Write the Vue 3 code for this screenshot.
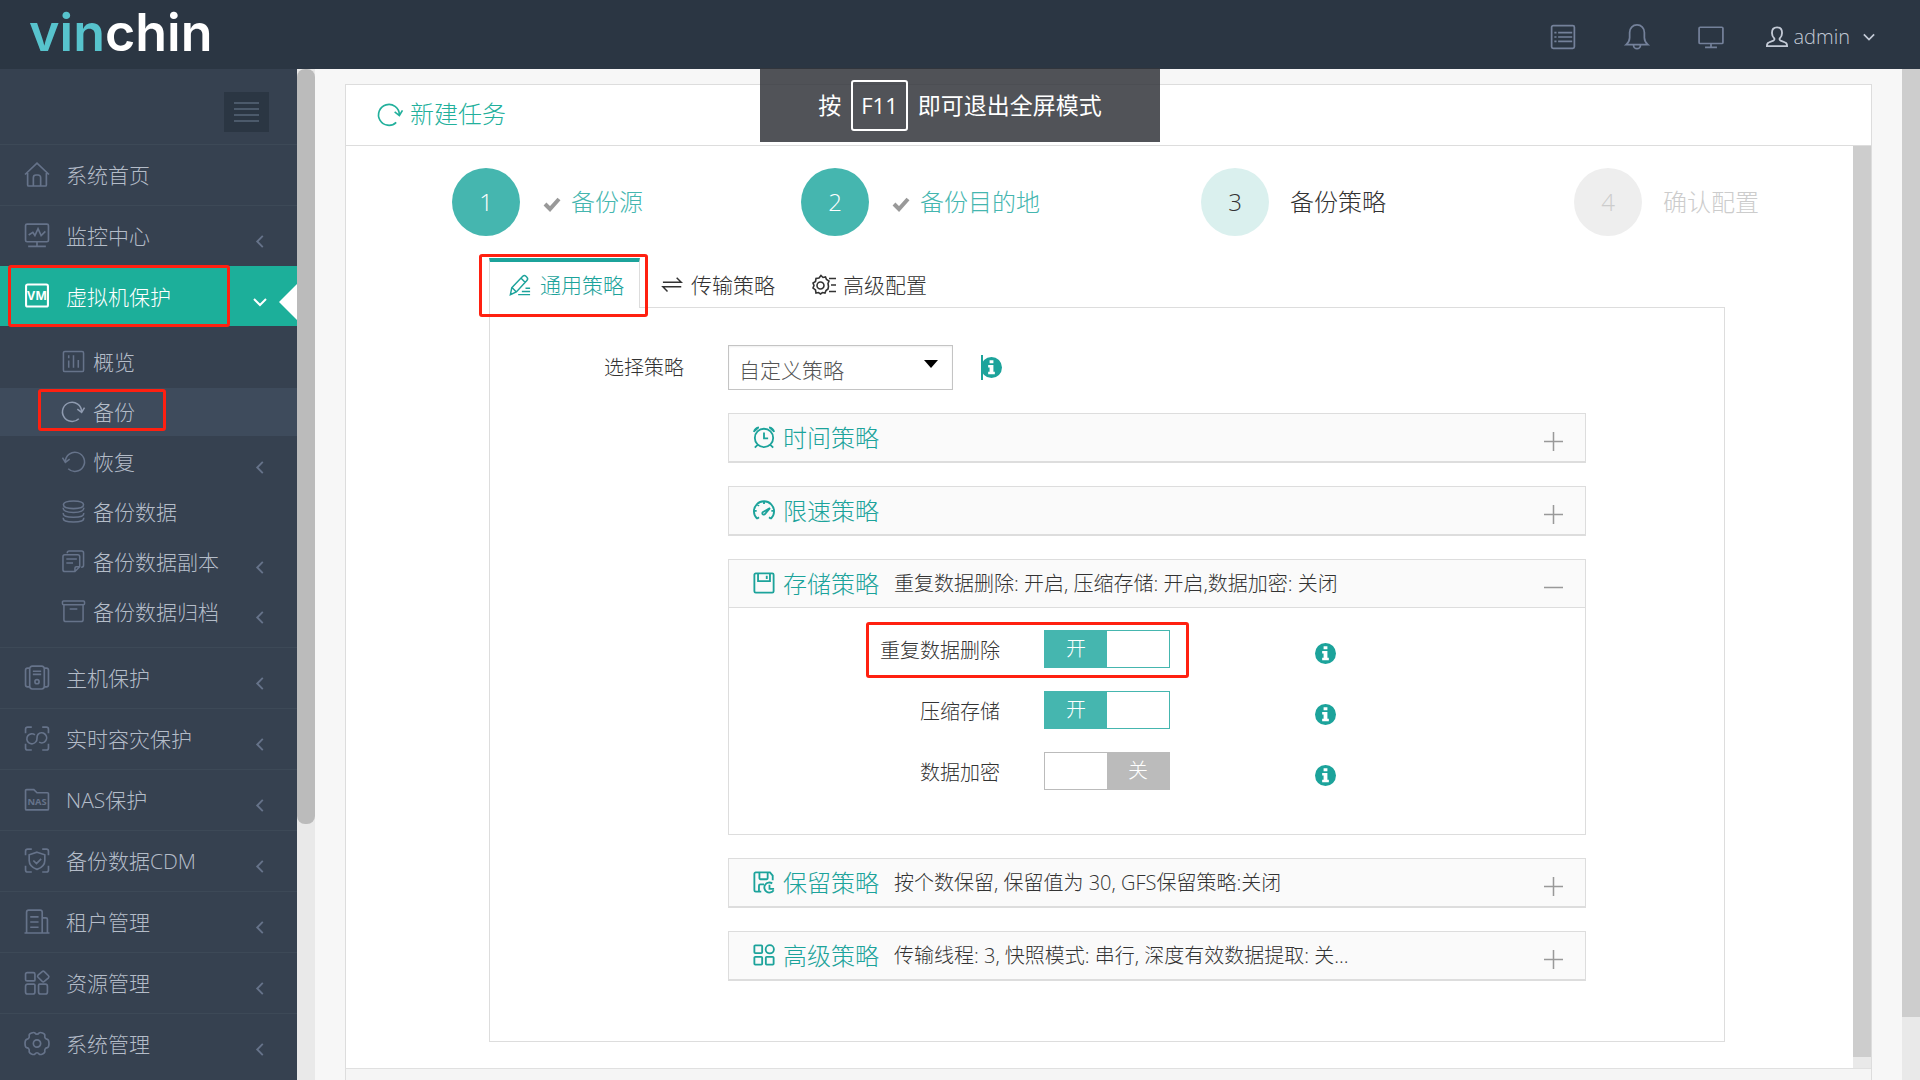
<script setup>
import { ref } from 'vue'

const box = 'M3 1.5h18a1.5 1.5 0 0 1 1.5 1.5v18a1.5 1.5 0 0 1-1.5 1.5H3A1.5 1.5 0 0 1 1.5 21V3A1.5 1.5 0 0 1 3 1.5z'
const corners = 'M1 7V3a2 2 0 0 1 2-2h4M17 1h4a2 2 0 0 1 2 2v4M23 17v4a2 2 0 0 1-2 2h-4M7 23H3a2 2 0 0 1-2-2v-4'

const icons = {
  home: 'M.5 12 12 1l11.500 11M3 10.500V22a1 1 0 0 0 1 1h16a1 1 0 0 0 1-1V10.500M8.500 23v-8a2.500 2.500 0 0 1 2.500-2.500h2a2.500 2.500 0 0 1 2.500 2.500v8',
  monitor: 'M2.500 1h19A1.500 1.500 0 0 1 23 2.500v14a1.500 1.500 0 0 1-1.500 1.500h-19A1.500 1.500 0 0 1 1 16.500v-14A1.500 1.500 0 0 1 2.500 1zM12 18v4M3.500 22.500h17M4 11.500l4-2.500 2 3 3-6.500 3 6.500 4-4',
  vm: box,
  host: 'M7.500 1h9A2.500 2.500 0 0 1 19 3.500v17a2.500 2.500 0 0 1-2.500 2.500h-9A2.500 2.500 0 0 1 5 20.500v-17A2.500 2.500 0 0 1 7.500 1zM5 3H3a2 2 0 0 0-2 2v14a2 2 0 0 0 2 2h2M19 3h2a2 2 0 0 1 2 2v14a2 2 0 0 1-2 2h-2M8 6h8M8 9h8M14 16a2 2 0 1 1-4 0 2 2 0 0 1 4 0z',
  disaster: corners + 'M10 8.500A4.800 4.800 0 1 0 11 15c2-2 0-5 2-7a4.800 4.800 0 1 1 1 7.500',
  nas: 'M2 2.500h7l3 3h10a1 1 0 0 1 1 1V21a1 1 0 0 1-1 1H2a1 1 0 0 1-1-1V3.500a1 1 0 0 1 1-1z',
  cdm: corners + 'M12 4l7.500 2.500V12c0 4.500-3 7-7.500 8.500C7.500 19 4.500 16.500 4.500 12V6.500zM8.500 12l3 3 4.500-4.500',
  tenant: 'M2 23V3a2 2 0 0 1 2-2h11a2 2 0 0 1 2 2v20M17 8.500h3.500A1.500 1.500 0 0 1 22 10v13M0 23h24M5.500 7.500h8M5.500 12.500h8M5.500 17.500h8',
  resource: 'M2.500 2.500h6a1.500 1.500 0 0 1 1.500 1.500v5.500a1 1 0 0 1-1 1H2.500A1.500 1.500 0 0 1 1 9V4a1.500 1.500 0 0 1 1.500-1.500zM3 13.500h6a1 1 0 0 1 1 1V21a2 2 0 0 1-2 2H3a2 2 0 0 1-2-2v-5.500a2 2 0 0 1 2-2zM14.500 13.500H20a2 2 0 0 1 2 2V21a2 2 0 0 1-2 2h-4.500a2 2 0 0 1-2-2v-6.500a1 1 0 0 1 1-1zM17 1.500a1.500 1.500 0 0 1 2 0l4 4a1.500 1.500 0 0 1 0 2l-4 3.500a1.500 1.500 0 0 1-2 0l-4-4a1.500 1.500 0 0 1 0-2z',
  system: 'M10 2c1 1.500 3 1.500 4 0 1-1.500 6 .5 5.500 2.500s1 3.500 2.500 3.500c2 1 2 7 0 8-1.500 0-3 1.500-2.500 3.500S15 23.500 14 22c-1-1.500-3-1.500-4 0-1 1.500-6-.5-5.500-2.500S3.500 16 2 16c-2-1-2-7 0-8 1.500 0 3-1.500 2.500-3.500S9 .5 10 2zM15.500 12a3.500 3.500 0 1 1-7 0 3.500 3.500 0 0 1 7 0z',
  overview: box + 'M7 5.500v3M7 11v7.500M12 5.500v13M17 10.500v8',
  backup: 'M17.500 19.500A10 10 0 1 1 20.500 12M16 9.500l4.500 3.500L23.500 8',
  restore: 'M6.500 19.500A10 10 0 1 0 3.500 12M.5 8l3 5L8 9.500',
  data: 'M22.500 5c0 2.500-4.500 4-10.500 4S1.500 7.500 1.500 5 6 1 12 1s10.500 1.500 10.500 4zM1.500 8c-1 3 3 5 10.500 5s11.500-2 10.500-5M1.500 13.500C.5 16.500 4.500 18 12 18s11.500-1.500 10.500-4.500M1.500 18.500C.5 21.500 4.500 23 12 23s11.500-1.500 10.500-4.500',
  copy: 'M5.500 3.500V3a2 2 0 0 1 2-2h13a2 2 0 0 1 2 2v13a2 2 0 0 1-2 2H20M3 5h13.500a2 2 0 0 1 2 2v10.500l-5 5H3a2 2 0 0 1-2-2V7a2 2 0 0 1 2-2zM18.500 17.500H15a1.500 1.500 0 0 0-1.500 1.500v3.500M4.500 9.500h11M4.500 13.500h7',
  archive: 'M1.500 1h21a1 1 0 0 1 1 1v2a1 1 0 0 1-1 1h-21a1 1 0 0 1-1-1V2a1 1 0 0 1 1-1zM2 5v15.500a2 2 0 0 0 2 2h16a2 2 0 0 0 2-2V5M8 9.500h8',
  list: box + 'M4 8h2M4 12h2M4 16h2M7.500 8h13M7.500 12h13M7.500 16h13',
  bell: 'M12 .8c4 0 6.800 3 6.800 7v5c0 2.500 1.200 4.500 3.200 6.200H2c2-1.700 3.200-3.700 3.200-6.200v-5c0-4 2.800-7 6.800-7zM8.800 19.500a3.200 3.200 0 0 0 6.400 0',
  screen: 'M2 3h20a1 1 0 0 1 1 1v13a1 1 0 0 1-1 1H2a1 1 0 0 1-1-1V4a1 1 0 0 1 1-1zM12 18v3M6.500 21.500h11',
  user: 'M12 1.500c3.500 0 5.500 2.500 5.500 6 0 2.500-1 4.500-2.500 6-.5 1 0 2 1 2.500l5 2c1.500.5 2 2 2 4H1c0-2 .5-3.500 2-4l5-2c1-.5 1.500-1.500 1-2.500-1.500-1.500-2.500-3.500-2.500-6 0-3.500 2-6 5.500-6z',
  edit: 'M3 15 15 2.500a2.500 2.500 0 0 1 3.500 0l1 1a2.500 2.500 0 0 1 0 3.500L8 19.500 1.500 22.500zM3.500 15l4 4M13.500 5l4 4M18 15.500h5M14 19h9M10 22.500h13',
  transfer: 'M1 9h20l-5-5M21 14H1l5 5',
  config: 'M9 2.500l2 2 2.500-.5 1 2.500L17 8l-1 2.500.5 3L16 16l-2 1.500-1 2.500-2.500-.5-2 1.500-2-1.500-2.500.5-.5-3L1 15l1-2.500L1 10l2.500-1.500L4 5.500l3-.5zM12 12.500a3.500 3.500 0 1 1-7 0 3.500 3.500 0 0 1 7 0zM17 5.500h7M19 12h5M17 18.500h7',
  clock: 'M22 13a10 10 0 1 1-20 0 10 10 0 0 1 20 0zM12 7v6.500h4.500M5 20.500l-3 3M19 20.500l3 3M1 6.500A6.500 6.500 0 0 1 6.500 1.500M1.500 5.500 5.500 2M23 6.500a6.500 6.500 0 0 0-5.500-5M22.500 5.500 18.500 2',
  gauge: 'M4.500 21.500a11 11 0 1 1 15 0M12 2v3.500M1.500 13H4M22.500 13H20M5 6l1.500 1.500M4.500 21.500l2-1.500M19.500 21.500l-2-1.500M10.500 14.500 18.500 10l-5.500 6.500a1.600 1.600 0 1 1-2.500-2z',
  disk: 'M3 1.500h18A1.500 1.500 0 0 1 22.500 3v18a1.500 1.500 0 0 1-1.500 1.500H3A1.500 1.500 0 0 1 1.500 21V3A1.500 1.500 0 0 1 3 1.500zM5.500 1.500v8.500h13V1.500M15 4v3.500',
  keep: 'M9 22.500H3A1.500 1.500 0 0 1 1.500 21V3A1.500 1.500 0 0 1 3 1.500h15.500L21.500 5v5M7 1.500V8a1 1 0 0 0 1 1h7a1 1 0 0 0 1-1V1.500M6.500 22.500V16a1.500 1.500 0 0 1 1.500-1.500h4M21 13.500a5.500 5.500 0 1 0 1.500 7.500M18 15v4.500h5',
  grid: 'M2.500 1.500h6.500a1 1 0 0 1 1 1V9a1 1 0 0 1-1 1H2.500a1 1 0 0 1-1-1V2.500a1 1 0 0 1 1-1zM2.500 14H9a1 1 0 0 1 1 1v6.500a1 1 0 0 1-1 1H2.500a1 1 0 0 1-1-1V15a1 1 0 0 1 1-1zM15 14h6.500a1 1 0 0 1 1 1v6.500a1 1 0 0 1-1 1H15a1 1 0 0 1-1-1V15a1 1 0 0 1 1-1zM22.800 5.800a4.500 4.500 0 1 1-9 0 4.500 4.500 0 0 1 9 0z'
}

const menu = [
  { label: '系统首页', icon: 'home' },
  { label: '监控中心', icon: 'monitor', arrow: true },
  {
    label: '虚拟机保护', icon: 'vm', badge: 'VM', active: true,
    children: [
      { label: '概览', icon: 'overview' },
      { label: '备份', icon: 'backup', active: true },
      { label: '恢复', icon: 'restore', arrow: true },
      { label: '备份数据', icon: 'data' },
      { label: '备份数据副本', icon: 'copy', arrow: true },
      { label: '备份数据归档', icon: 'archive', arrow: true }
    ]
  },
  { label: '主机保护', icon: 'host', arrow: true },
  { label: '实时容灾保护', icon: 'disaster', arrow: true },
  { label: 'NAS保护', icon: 'nas', badge: 'NAS', arrow: true },
  { label: '备份数据CDM', icon: 'cdm', arrow: true },
  { label: '租户管理', icon: 'tenant', arrow: true },
  { label: '资源管理', icon: 'resource', arrow: true },
  { label: '系统管理', icon: 'system', arrow: true }
]

const steps = [
  { label: '备份源', state: 'done' },
  { label: '备份目的地', state: 'done' },
  { label: '备份策略', state: 'current' },
  { label: '确认配置', state: 'todo' }
]

const tabs = [
  { label: '通用策略', icon: 'edit' },
  { label: '传输策略', icon: 'transfer' },
  { label: '高级配置', icon: 'config' }
]
const activeTab = ref(0)

const strategy = ref('custom')

const panels = ref([
  { title: '时间策略', icon: 'clock', summary: '', open: false },
  { title: '限速策略', icon: 'gauge', summary: '', open: false },
  { title: '存储策略', icon: 'disk', summary: '重复数据删除: 开启, 压缩存储: 开启,数据加密: 关闭', open: true },
  { title: '保留策略', icon: 'keep', summary: '按个数保留, 保留值为 30, GFS保留策略:关闭', open: false },
  { title: '高级策略', icon: 'grid', summary: '传输线程: 3, 快照模式: 串行, 深度有效数据提取: 关...', open: false }
])

const switches = ref([
  { id: 'dedup', label: '重复数据删除', on: true, marked: true },
  { id: 'compress', label: '压缩存储', on: true },
  { id: 'encrypt', label: '数据加密', on: false }
])
</script>

<template>
  <div class="app">
    <header class="topbar">
      <a class="logo" href="#"><span>vin</span>chin</a>
      <nav class="tools">
        <button class="tool" aria-label="任务"><svg viewBox="0 0 24 24" class="icon"><path :d="icons.list" /></svg></button>
        <button class="tool" aria-label="告警"><svg viewBox="0 0 24 24" class="icon"><path :d="icons.bell" /></svg></button>
        <button class="tool" aria-label="大屏"><svg viewBox="0 0 24 24" class="icon"><path :d="icons.screen" /></svg></button>
        <button class="account">
          <svg viewBox="0 0 24 24" class="icon"><path :d="icons.user" /></svg>
          <span>admin</span>
          <svg viewBox="0 0 14 8" class="down"><path d="M1 1l6 6 6-6" /></svg>
        </button>
      </nav>
    </header>

    <div class="shell">
      <aside class="sidebar">
        <div class="toggle-row">
          <button class="collapse" aria-label="收起菜单"><i></i><i></i><i></i><i></i></button>
        </div>
        <ul class="menu">
          <li v-for="item in menu" :key="item.label">
            <a href="#" class="item" :class="{ active: item.active, marked: item.active }">
              <svg viewBox="0 0 24 24" class="icon">
                <path :d="icons[item.icon]" />
                <text v-if="item.badge" x="12" :y="item.badge === 'VM' ? 16 : 17" :class="item.badge.toLowerCase()">{{ item.badge }}</text>
              </svg>
              <span class="name">{{ item.label }}</span>
              <svg v-if="item.arrow" viewBox="0 0 8 14" class="left"><path d="M7 1L1 7l6 6" /></svg>
              <svg v-if="item.active" viewBox="0 0 14 8" class="down"><path d="M1 1l6 6 6-6" /></svg>
            </a>
            <ul v-if="item.children" class="submenu">
              <li v-for="sub in item.children" :key="sub.label">
                <a href="#" class="subitem" :class="{ active: sub.active, marked: sub.active }">
                  <svg viewBox="0 0 24 24" class="icon"><path :d="icons[sub.icon]" /></svg>
                  <span class="name">{{ sub.label }}</span>
                  <svg v-if="sub.arrow" viewBox="0 0 8 14" class="left"><path d="M7 1L1 7l6 6" /></svg>
                </a>
              </li>
            </ul>
          </li>
        </ul>
      </aside>
      <div class="scroll side-scroll"><i></i></div>

      <main class="main">
        <section class="card">
          <h1 class="card-head">
            <svg viewBox="0 0 24 24" class="icon"><path :d="icons.backup" /></svg>
            新建任务
          </h1>
          <div class="card-body">
            <div class="wizard">
              <ol class="steps">
                <li v-for="(step, i) in steps" :key="step.label" :class="step.state">
                  <span class="num">{{ i + 1 }}</span>
                  <span class="step-label">
                    <svg v-if="step.state === 'done'" viewBox="0 0 20 16" class="check"><path d="M3 8l5 5 9-10" /></svg>
                    {{ step.label }}
                  </span>
                </li>
              </ol>

              <div class="tabs">
                <button v-for="(tab, i) in tabs" :key="tab.label" class="tab" :class="{ active: i === activeTab }" @click="activeTab = i">
                  <svg viewBox="0 0 24 24" class="icon"><path :d="icons[tab.icon]" /></svg>
                  {{ tab.label }}
                </button>
              </div>

              <div class="pane">
                <div class="choose">
                  <label for="strategy">选择策略</label>
                  <div class="select">
                    <select id="strategy" v-model="strategy"><option value="custom">自定义策略</option></select>
                    <svg viewBox="0 0 14 8"><path d="M0 0h14L7 8z" /></svg>
                  </div>
                  <span class="hint bar">
                    <svg viewBox="0 0 22 22"><circle cx="11" cy="11" r="11" /><path d="M9 3.500h4v3H9zM7.500 8.500h5.500v7h1.500v2.500h-7v-2.500H9v-4.500H7.500z" /></svg>
                  </span>
                </div>

                <div class="panels">
                  <section v-for="panel in panels" :key="panel.title" class="panel">
                    <button class="panel-head" :aria-expanded="panel.open" @click="panel.open = !panel.open">
                      <svg viewBox="0 0 24 24" class="icon"><path :d="icons[panel.icon]" /></svg>
                      <span class="panel-title">{{ panel.title }}</span>
                      <span class="summary">{{ panel.summary }}</span>
                      <svg viewBox="0 0 20 20" class="sign"><path :d="panel.open ? 'M0 10h20' : 'M0 10h20M10 0v20'" /></svg>
                    </button>
                    <div v-if="panel.open" class="panel-body">
                      <div v-for="s in switches" :key="s.id" class="switch-row">
                        <label :for="s.id">{{ s.label }}</label>
                        <label class="switch" :class="{ on: s.on, marked: s.marked }">
                          <input :id="s.id" v-model="s.on" type="checkbox" />
                          <span>{{ s.on ? '开' : '关' }}</span>
                        </label>
                        <span class="hint">
                          <svg viewBox="0 0 22 22"><circle cx="11" cy="11" r="11" /><path d="M9 3.500h4v3H9zM7.500 8.500h5.500v7h1.500v2.500h-7v-2.500H9v-4.500H7.500z" /></svg>
                        </span>
                      </div>
                    </div>
                  </section>
                </div>
              </div>
            </div>
            <div class="scroll body-scroll"><i></i></div>
          </div>
          <footer class="card-foot"></footer>
        </section>
      </main>
      <div class="scroll page-scroll"><i></i></div>
    </div>

    <div class="notice">按<kbd>F11</kbd>即可退出全屏模式</div>
  </div>
</template>

<style>
body {
  margin: 0;
}
</style>

<style scoped>
.app {
  position: relative;
  display: flex;
  flex-direction: column;
  height: 100vh;
  overflow: hidden;
  font-family: "Open Sans", "Noto Sans CJK SC", sans-serif;
  font-weight: 300;
  font-size: 21px;
  line-height: 30px;
  color: #333;
  background: #f7f7f7;
}
.app *, .app *::after {
  box-sizing: border-box;
}
button, select {
  font: inherit;
  color: inherit;
  background: none;
  border: 0;
  padding: 0;
}
a {
  color: inherit;
  text-decoration: none;
}
ul, ol {
  list-style: none;
  margin: 0;
  padding: 0;
}
svg {
  display: block;
  flex: none;
  overflow: visible;
  fill: none;
  stroke: currentColor;
  stroke-width: 1.6;
}

/* red callout frames */
.marked::after {
  content: "";
  position: absolute;
  border: 3px solid #ff2010;
  border-radius: 3px;
  pointer-events: none;
}

.topbar {
  display: flex;
  flex: none;
  justify-content: space-between;
  height: 69px;
  padding: 0 45px 0 29px;
  background: #2b3643;
}
.logo {
  font-family: Inter, sans-serif;
  font-weight: 600;
  font-size: 52px;
  line-height: 66px;
  color: #fff;
}
.logo span {
  color: #57c3cd;
}
.tools {
  display: flex;
  align-items: center;
  padding-top: 5px;
  color: #74819a;
}
.tool .icon {
  width: 26px;
  height: 26px;
}
.tool {
  margin-right: 48px;
}
.account {
  display: flex;
  align-items: center;
  margin-left: -6px;
  color: #c3cad6;
  font-size: 20px;
}
.account .icon {
  width: 22px;
  height: 22px;
  margin-right: 6px;
  stroke-width: 2;
}
.account .down {
  width: 12px;
  margin-left: 13px;
}
.down {
  width: 14px;
  height: 8px;
  stroke-width: 2;
}

.shell {
  display: flex;
  flex: 1;
  min-height: 0;
}
.sidebar {
  flex: none;
  width: 297px;
  overflow: hidden;
  background: #364150;
  color: #b4bcc8;
}
.toggle-row {
  display: flex;
  justify-content: flex-end;
  height: 75px;
  padding: 23px 28px 12px 0;
}
.collapse {
  display: flex;
  flex-direction: column;
  align-items: center;
  justify-content: center;
  gap: 4px;
  width: 45px;
  background: #2b3643;
}
.collapse i {
  width: 25px;
  height: 2px;
  background: #4c5a6b;
}
.item {
  position: relative;
  display: flex;
  align-items: center;
  height: 61px;
  padding: 0 33px 0 24px;
  border-top: 1px solid #3d4957;
}
.item .icon {
  width: 26px;
  height: 25px;
  margin: 0 16px 2px 0;
}
.item .icon, .subitem .icon, .left {
  color: #66738a;
}
.icon text {
  fill: currentColor;
  stroke: none;
  font-family: "Open Sans", sans-serif;
  text-anchor: middle;
}
.icon .vm {
  font-size: 12px;
  font-weight: 700;
}
.icon .nas {
  font-size: 9px;
  font-weight: 700;
}
.name {
  flex: 1;
}
.left {
  width: 8px;
  height: 24px;
  padding-top: 11px;
  stroke-width: 2;
}
.item.active {
  height: 60px;
  background: #1caf9a;
  border-color: #1caf9a;
  color: #fff;
  padding-right: 30px;
}
.item.active .icon {
  color: #fff;
  stroke-width: 2;
}
.item.active .down {
  margin-top: 11px;
}
.item.active::before {
  content: "";
  position: absolute;
  right: 0;
  top: 17px;
  border: 18px solid transparent;
  border-left-width: 0;
  border-right-color: #fff;
}
.item.marked::after {
  inset: -2px 67px -1px 8px;
}
.submenu {
  display: flex;
  flex-direction: column;
  gap: 2px;
  padding: 12px 0 11px;
}
.subitem {
  position: relative;
  display: flex;
  align-items: center;
  height: 48px;
  padding: 0 33px 0 62px;
}
.subitem .icon {
  width: 23px;
  height: 23px;
  margin: 0 8px 2px 0;
}
.subitem.active {
  background: #3e4b5c;
}
.subitem.active .icon {
  color: #8f9bb0;
}
.subitem.marked::after {
  inset: 1px 131px 5px 38px;
}

.scroll {
  display: grid;
  flex: none;
  width: 18px;
  background: #e9e9e9;
}
.scroll i {
  background: #cdcdcd;
}
.side-scroll {
  grid-template-rows: 755fr 256fr;
}
.side-scroll i {
  background: #bbb;
  border-radius: 8px;
}
.page-scroll {
  grid-template-rows: 948fr 63fr;
}
.body-scroll {
  grid-template-rows: 911fr 11fr;
}

.main {
  display: flex;
  flex: 1;
  min-width: 0;
  padding: 15px 30px 0;
}
.card {
  display: flex;
  flex: 1;
  flex-direction: column;
  min-width: 0;
  background: #fff;
  border: 1px solid #ddd;
  border-bottom: 0;
}
.card-head {
  display: flex;
  flex: none;
  align-items: center;
  gap: 7px;
  height: 61px;
  margin: 0;
  padding: 0 0 2px 32px;
  border-bottom: 1px solid #ddd;
  font-size: 24px;
  font-weight: 300;
  color: #22b09c;
}
.card-head .icon {
  width: 25px;
  height: 25px;
}
.card-body {
  display: flex;
  flex: 1;
  min-height: 0;
}
.card-foot {
  height: 12px;
  flex: none;
  background: #f5f5f5;
  border-top: 1px solid #e0e0e0;
}
.wizard {
  flex: 1;
  min-width: 0;
  overflow: hidden;
}

.steps {
  display: grid;
  grid-template-columns: repeat(4, 1fr);
  padding: 22px 0 22px 15px;
  font-size: 24px;
}
.steps li {
  display: flex;
  align-items: center;
  justify-content: center;
  gap: 21px;
}
.num {
  display: flex;
  align-items: center;
  justify-content: center;
  width: 68px;
  height: 68px;
  border-radius: 50%;
  background: #eee;
}
.step-label {
  display: flex;
  align-items: center;
  gap: 8px;
}
.check {
  width: 22px;
  height: 16px;
  margin-top: 4px;
  color: #999;
  stroke-width: 4;
}
.done {
  color: #45b6af;
}
.done .num {
  background: #45b6af;
  color: #fff;
}
.current .num {
  background: #daf0ee;
}
.todo {
  color: #ccc;
}

.tabs {
  display: flex;
  gap: 2px;
  margin-left: 143px;
}
.tab {
  position: relative;
  display: flex;
  align-items: center;
  gap: 7px;
  height: 49px;
  padding: 0 15px 0 20px;
  border-top: 4px solid transparent;
}
.tab .icon {
  width: 22px;
  height: 22px;
}
.tab:last-child .icon {
  width: 24px;
  height: 24px;
}
.tab.active {
  z-index: 1;
  gap: 9px;
  height: 50px;
  margin-bottom: -1px;
  padding-left: 19px;
  background: #fff;
  border: 1px solid #ddd;
  border-top: 4px solid #1ca39b;
  border-bottom: 0;
  color: #1ca39b;
}
.tab.active::after {
  content: "";
  position: absolute;
  inset: -8px -9px -9px -11px;
  border: 3px solid #ff2010;
  border-radius: 3px;
}
.pane {
  margin: 0 128px 0 143px;
  padding: 37px 138px 60px 0;
  border: 1px solid #ddd;
}
.choose {
  display: flex;
  align-items: center;
}
.choose > label {
  width: 194px;
  margin-right: 44px;
  text-align: right;
  font-size: 20px;
}
.select {
  position: relative;
  width: 225px;
}
.select select {
  display: block;
  width: 100%;
  height: 45px;
  padding: 5px 10px 0;
  appearance: none;
  border: 1px solid #c4c4c4;
  box-shadow: inset 0 1px 2px #0001;
  color: #555;
}
.select svg {
  position: absolute;
  top: 15px;
  right: 15px;
  width: 14px;
  height: 8px;
  fill: #000;
  stroke: none;
}
.hint {
  display: flex;
  align-items: center;
  height: 25px;
}
.hint svg {
  width: 21px;
  height: 21px;
  stroke: none;
}
.hint circle {
  fill: #1ca39b;
}
.hint path {
  fill: #fff;
}
.hint.bar {
  margin-left: 28px;
  box-shadow: inset 2px 0 #1ca39b;
}

.panels {
  display: flex;
  flex-direction: column;
  gap: 23px;
  margin: 23px 0 0 238px;
}
.panel {
  border: 1px solid #ddd;
}
.panel-head {
  display: flex;
  align-items: center;
  width: 100%;
  height: 48px;
  padding: 0 22px 0 24px;
  border-bottom: 1px solid #ddd;
  background: #fafafa;
  text-align: left;
}
.panel-head .icon {
  width: 22px;
  height: 22px;
  margin: 0 8px 2px 0;
  color: #1ca39b;
  stroke-width: 2;
}
.panel-title {
  margin-right: 15px;
  font-size: 24px;
  color: #1ca39b;
}
.summary {
  flex: 1;
  font-size: 20px;
}
.sign {
  width: 19px;
  height: 19px;
  margin-top: 7px;
  color: #999;
}
.panel-body {
  display: flex;
  flex-direction: column;
  gap: 23px;
  padding: 22px 0 44px;
}
.switch-row {
  display: flex;
  align-items: center;
  height: 38px;
}
.switch-row > label:first-child {
  width: 271px;
  margin: 4px 44px 0 0;
  text-align: right;
  font-size: 20px;
}
.switch {
  position: relative;
  display: flex;
  justify-content: flex-end;
  width: 126px;
  height: 38px;
  margin-right: 145px;
  border: 1px solid #bbb;
  color: #fff;
  font-size: 20px;
}
.switch input {
  position: absolute;
  inset: 0;
  margin: 0;
  opacity: 0;
}
.switch span {
  display: flex;
  align-items: center;
  justify-content: center;
  width: 50%;
  background: #bbb;
}
.switch.on {
  justify-content: flex-start;
  border-color: #45b6af;
}
.switch.on span {
  background: #45b6af;
}
.switch.marked::after {
  inset: -9px -20px -11px -179px;
}
.switch-row .hint {
  margin-top: 8px;
}

.notice {
  position: absolute;
  top: 68px;
  left: 50%;
  display: flex;
  align-items: center;
  justify-content: center;
  width: 400px;
  height: 74px;
  transform: translateX(-50%);
  background: rgba(50, 53, 59, .85);
  color: #fff;
  font-size: 23px;
  font-weight: 400;
}
.notice kbd {
  display: flex;
  align-items: center;
  height: 51px;
  margin: 0 10px;
  padding: 0 8px;
  border: 2px solid #fff;
  border-radius: 3px;
  font-family: inherit;
  font-size: 22px;
}
</style>
